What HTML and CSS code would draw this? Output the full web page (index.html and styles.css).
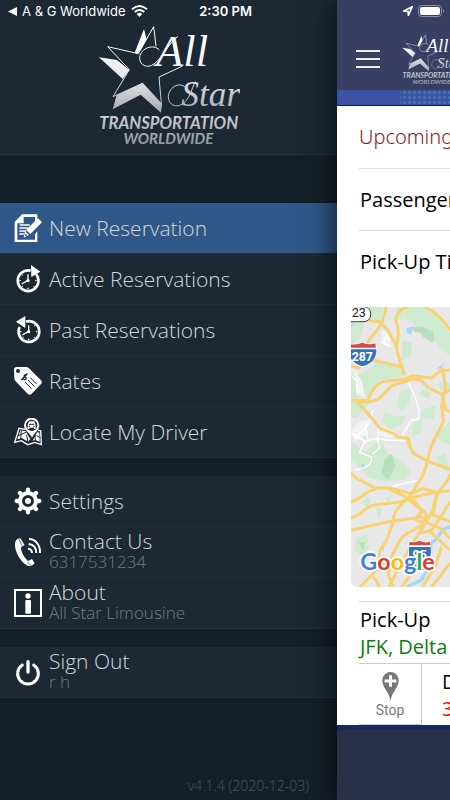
FILE: index.html
```html
<!doctype html>
<html lang='en-US'>
<head>
  <title>All Star Transportation</title>
  <meta charset='utf-8'>
  <meta name='viewport' content='width=device-width, initial-scale=1'>
  <link rel='stylesheet' href='styles.css'>
</head>
<body>
  <div class='app'>
    <aside class='drawer'>
      <header class='brand'>
        <div class='status'>
          <svg class='back' viewBox='0 0 9 9'><path d='M0 4.5 9 0V9Z'/></svg>
          <span>A &amp; G Worldwide</span>
          <svg class='wifi' viewBox='0 0 17 12'>
            <path class='line' d='M1 4.3Q8.500-2.200 16 4.300M3.700 7Q8.500 3 13.300 7'/>
            <path d='M5.700 8.900Q8.500 6.800 11.300 8.900L8.500 12Z'/>
          </svg>
          <time>2:30 PM</time>
        </div>
        <svg class='logo' viewBox='24 30 426 360' role='img' aria-label='All Star Transportation Worldwide'>
          <defs>
            <linearGradient id='silver' gradientUnits='userSpaceOnUse' x1='0' y1='90' x2='0' y2='390'>
              <stop offset='0' stop-color='#fff'/>
              <stop offset='.35' stop-color='#e4e5e8'/>
              <stop offset='.65' stop-color='#a9adb4'/>
              <stop offset='.72' stop-color='#d0d2d6'/>
              <stop offset='1' stop-color='#8e939b'/>
            </linearGradient>
            <g id='mark' fill='url(#silver)'>
              <path d='M27 127 81 135 118 165 98 192ZM162 42 170 73 145 116 134 113ZM80 241 158 203 216 266 213 293 152 239 68 283Z'/>
              <path class='thin' d='M198 94 191 35 145 116 53 95 118 164 69 245 158 205M276 154 207 186 215 276'/>
              <path class='thin' d='M208 105C190 85 153 100 149 126C147 151 172 162 192 147C219 128 236 83 264 64'/>
              <path class='thin' d='M292 223C272 196 238 214 235 244C234 271 260 280 279 266C300 250 303 225 316 200'/>
              <text class='script' x='198' y='154' font-size='134'>All</text>
              <text class='script' x='274' y='272' font-size='106'>Star</text>
              <text class='caps' x='236' y='343' font-size='50'>TRANSPORTATION</text>
              <text class='caps' x='235' y='386' font-size='45'>WORLDWIDE</text>
            </g>
          </defs>
          <use href='#mark'/>
        </svg>
      </header>

      <nav>
        <ul class='menu'>
          <li><a href='#new' class='active'>
            <svg viewBox='42 178 84 84'>
              <path d='M44 202 66 179H112V202L105 208V187H71V206H52V255H105V239L112 230V262H44Z'/>
              <path class='line' stroke-width='4' d='M59 211H89M58 220H85M58 229H78M58 238H72'/>
              <path d='M114 191 126 203 91 238 78 226ZM75 230 87 241 71 249Z'/>
              <circle class='blue' cx='78' cy='242' r='3'/>
            </svg>
            <span>New Reservation</span></a></li>
          <li><a href='#active'>
            <svg viewBox='42 330 84 84'>
              <path class='line' stroke-width='8' d='M108 357A31 31 0 1 1 92 347'/>
              <path d='M93 330 121 350 94 366Z'/>
              <path class='line' stroke-width='4' d='M84 358V376L65 387M62 377H58M110 377H106M84 402V398M68 361 66 359M68 393 66 395M101 394 103 396'/>
              <circle cx='84' cy='377' r='5'/>
            </svg>
            <span>Active Reservations</span></a></li>
          <li><a href='#past'>
            <svg viewBox='42 33 84 84'>
              <path class='line' stroke-width='8' d='M78 50A31 31 0 1 1 59 66'/>
              <path d='M48 50 76 33V69Z'/>
              <path class='line' stroke-width='4' d='M86 61V79L67 90M64 80H60M112 80H108M86 105V101M103 63 105 61M70 96 68 98M103 97 105 99'/>
              <circle cx='86' cy='80' r='5'/>
            </svg>
            <span>Past Reservations</span></a></li>
          <li><a href='#rates'>
            <svg viewBox='42 184 84 84'>
              <path fill-rule='evenodd' d='M50 184H78Q83 184 87 188L123 224Q128 230 123 235L95 264Q89 270 83 264L46 226Q43 223 43 218L42 192Q42 184 50 184ZM60 196A6 6 0 1 0 48 196A6 6 0 1 0 60 196'/>
              <path class='cut' stroke-width='4' d='M81 209Q75 204 73 210C70 216 81 213 78 219Q75 225 67 218M82 203 64 223'/>
              <path class='cut' stroke-width='3' d='M91 216 110 235M84 223 103 242M76 230 95 249'/>
            </svg>
            <span>Rates</span></a></li>
          <li><a href='#driver'>
            <svg viewBox='42 336 84 84'>
              <path class='line' stroke-width='4' d='M76 370 57 367 44 409 64 404 83 416 104 409 124 416 122 374 114 373'/>
              <path d='M61 373 77 376 91 399 84 407 66 396 52 400ZM111 379 118 380 119 407 105 402 98 404Z'/>
              <path class='cut' stroke-width='3' d='M64 372 62 399M52 390 78 379M80 386 84 412M105 386 106 407M110 389 122 396'/>
              <path d='M96 395C89 379 72 374 72 358A23 23 0 0 1 118 358C118 374 103 379 96 395Z'/>
              <circle class='dark' cx='95' cy='358' r='17'/>
              <path d='M87 346H103L107 356V369H102V365H88V369H83V356Z'/>
              <path class='cut' stroke-width='3' d='M87 355H103M86 361H90M100 361H104'/>
            </svg>
            <span>Locate My Driver</span></a></li>
        </ul>

        <ul class='menu'>
          <li><a href='#settings'>
            <svg viewBox='42 96 84 84'>
              <circle class='line' stroke-width='12' cx='84' cy='138' r='24'/>
              <path class='line' stroke-linecap='round' stroke-width='13' d='M84 111V104M84 165V172M57 138H50M111 138H118M65 119 60 114M103 157 108 162M65 157 60 162M103 119 108 114'/>
              <circle cx='84' cy='138' r='9'/>
            </svg>
            <span>Settings</span></a></li>
          <li><a href='#contact'>
            <svg viewBox='42 249 84 84'>
              <path d='M61 250Q51 249 47 258C38 279 60 322 83 332Q91 334 98 330L104 325 96 312 84 318C72 308 63 291 63 277L74 271Z'/>
              <path class='cut' stroke-width='2' d='M56 252 69 276M81 320 93 331'/>
              <path class='line' stroke-width='6' d='M84 281Q96 282 96 294M86 267Q109 270 109 294M87 252C108 252 121 272 120 294'/>
            </svg>
            <span>Contact Us<small>6317531234</small></span></a></li>
          <li><a href='#about'>
            <svg viewBox='42 39 84 84'>
              <rect class='line' stroke-width='6' x='45' y='42' width='78' height='78'/>
              <circle cx='84' cy='60' r='8'/>
              <rect x='76' y='72' width='17' height='41' rx='3'/>
            </svg>
            <span>About<small>All Star Limousine</small></span></a></li>
        </ul>

        <ul class='menu'>
          <li><a href='#signout'>
            <svg viewBox='42 250 84 84'>
              <path class='line' stroke-linecap='round' stroke-width='9' d='M67 271A31 31 0 1 0 101 271'/>
              <path class='line' stroke-linecap='round' stroke-width='10' d='M84 261V292'/>
            </svg>
            <span>Sign Out<small>r h</small></span></a></li>
        </ul>
      </nav>
      <footer class='version'>v4.1.4 (2020-12-03)</footer>
    </aside>

    <main class='page'>
      <header class='topbar'>
        <div class='status'>
          <svg class='arrow' viewBox='0 0 12 12'><path d='M1 6 11 1 6.500 11 6 6.500Z'/></svg>
          <svg class='battery' viewBox='0 0 27 12'>
            <rect class='shell' x='.5' y='.5' width='23' height='11' rx='3'/>
            <rect x='2' y='2' width='20' height='8' rx='2'/>
            <path class='tip' d='M25 4Q27 6 25 8Z'/>
          </svg>
        </div>
        <div class='tools'>
          <button class='burger' aria-label='Menu'><i></i><i></i><i></i></button>
          <svg class='logo' viewBox='24 30 426 360' aria-hidden='true'><use href='#mark'/></svg>
        </div>
      </header>
      <div class='strip'></div>

      <div class='trip'>
        <h1>Upcoming</h1>
        <p class='field'>Passenger</p>
        <p class='field'>Pick-Up Time</p>
        <div class='map'>
          <svg viewBox='78 36 297 840' preserveAspectRatio='xMinYMin slice' role='img' aria-label='Map of the route'>
            <rect class='land' x='78' y='36' width='600' height='840'/>
            <g class='park'>
              <path d='M78 36H175L166 75 118 82 105 130 78 150ZM215 36H240L232 75 212 70ZM124 230 160 195 222 216 238 243 160 255 135 300 78 312V245ZM78 318 132 325 95 370H78Z'/>
              <path d='M243 36H300L345 75 375 115V180L350 165 325 130 290 120 262 80 235 70ZM233 135 262 145 255 185 230 195ZM160 95 200 125 210 145 185 130ZM225 290 258 280 255 320 232 350 215 335ZM290 282 318 290 312 312 285 300ZM180 352 212 365 240 362 232 385 195 405 172 378ZM290 345 335 330 325 372 285 365ZM262 392 290 370 285 415 262 424ZM340 260 375 265V290L345 285ZM330 415 375 380V450L345 435Z'/>
              <path d='M78 440 120 470 165 435 185 470 230 500 262 530 235 555 180 558 135 550 90 505 78 500ZM110 620 130 605 138 625 125 640ZM150 635 172 640 163 670ZM180 610 200 600 192 622ZM92 730 125 716 133 755 112 782 90 765ZM335 490 362 475 375 530 348 520ZM175 790 200 800 188 836 170 820Z'/>
            </g>
            <path class='wood' d='M260 97 290 95 326 112V143L295 127 285 112 268 110ZM170 535 180 490 200 478 212 512 190 555ZM102 745 122 740 112 768Z'/>
            <path class='town' d='M168 105 190 112 202 155 170 145ZM88 225 112 260 120 305 95 300ZM78 405 105 378 130 375 124 420 88 440ZM165 390 210 410 198 430 160 420Z'/>
            <g class='water'>
              <path d='M245 100 265 94 258 120 246 113ZM335 222 361 200 348 220ZM78 90 90 82 78 100ZM108 510 118 505 113 522ZM170 760 178 748 175 772Z'/>
              <path class='river' d='M375 696C345 700 345 730 318 745C317 785 310 820 293 850C280 865 262 865 245 876'/>
            </g>
            <path class='street' d='M250 258C262 290 286 330 282 372L259 375 230 425 255 432M82 245 95 258 98 295M88 432 130 390 145 345M78 415 122 440 150 430 255 440M120 380 130 440M160 385 158 440M90 525C120 520 145 510 138 485L103 472 122 437M160 436 163 460 142 478M180 435 240 437M205 573 278 557M185 120 175 145M178 125 195 135M165 140 195 155'/>
            <g class='road-edge'>
              <path d='M184 36C175 70 175 85 140 125L124 148M130 77 165 80C195 110 200 125 212 148C220 185 228 215 240 240M250 36C225 40 210 60 212 80C222 95 222 125 215 150M145 195 230 216M300 36C330 50 355 72 375 106M78 316 128 316C145 275 160 262 178 259L240 253 262 242 320 249 345 228 375 225M92 316C118 325 145 320 158 314L200 272 240 260 262 252 285 254 310 278 350 298 375 285M95 320 120 346 165 400 205 415 220 426 250 430 255 450M352 218 362 275 350 330 355 380 320 450M350 295 362 343 375 350M78 213 100 218 145 195'/>
              <path d='M245 435 265 475 310 500 375 522M328 435C305 475 310 525 282 560L258 598C235 630 205 635 202 690L185 735 165 765 160 800M78 535 95 550 152 580 190 578 258 596 295 580 330 592 375 587M78 620C110 615 120 585 155 582M78 668C110 665 115 635 150 630L230 620 255 610 330 592M78 706 190 680 265 670 295 665M258 605 292 648 270 672 292 684 305 658 292 645M190 580 235 602 292 648M335 595 322 650 285 710 255 760 190 876M370 540 375 545 335 600 325 660 375 680M290 690C265 710 240 710 225 735L200 785 190 840 205 876M375 620 345 670 320 705 285 715M300 680 345 700 375 730M285 712 315 710 375 765M350 755 330 815 292 876M375 805 320 876M105 876 150 830 180 790M145 845 165 876M230 876 270 820 318 745'/>
            </g>
            <rect class='route' x='50' y='35' width='87' height='45' rx='20'/>
            <text class='route-no' x='80' y='67' font-size='38'>23</text>
            <path class='shield-edge' d='M72 148Q90 151 112 143Q133 151 151 145Q164 199 112 216Q66 204 72 148Z'/>
            <path class='shield-top' d='M72 148Q90 151 112 143Q133 151 151 145L153 158H72Z'/>
            <path class='shield-base' d='M71 163H154Q156 202 112 214Q72 204 71 163Z'/>
            <text class='shield-no' x='112' y='198' font-size='37'>287</text>
            <path class='shield-edge' d='M254 740 283 744 314 740 320 790Q312 827 284 833Q252 821 250 785Z'/>
            <path class='shield-top' d='M254 740Q271 745 284 737Q298 746 314 740L317 751H252Z'/>
            <path class='shield-base' d='M252 756H317Q322 815 284 831Q248 812 252 756Z'/>
            <text class='shield-no' x='284' y='791' font-size='37'>95</text>
            <text class='google' x='106' y='825' font-size='70'><tspan class='g-blue'>G</tspan><tspan class='g-red'>o</tspan><tspan class='g-yellow'>o</tspan><tspan class='g-blue'>g</tspan><tspan class='g-green'>l</tspan><tspan class='g-red'>e</tspan></text>
          </svg>
        </div>
        <div class='field pickup'>
          <p>Pick-Up</p>
          <p class='place'>JFK, Delta</p>
        </div>
        <div class='stops'>
          <button class='stop'>
            <svg viewBox='173 246 50 88'><path d='M198 334C194 305 173 294 173 271A25 25 0 0 1 223 271C223 294 202 305 198 334Z'/><path class='plus' d='M198 256V291M180 273H216'/></svg>
            Stop
          </button>
          <div class='dropoff'>
            <p>Drop-Off</p>
            <p class='alert'>3</p>
          </div>
        </div>
      </div>
      <footer class='bottombar'></footer>
    </main>
  </div>
</body>
</html>
```
FILE: styles.css
```css
* { box-sizing: border-box; }
body { margin: 0; background: #151f28; font: 20px 'Open Sans', 'Noto Sans', sans-serif; }
h1, p, ul { margin: 0; padding: 0; }
ul { list-style: none; }
a { color: inherit; text-decoration: none; }
button { background: none; border: 0; padding: 0; font: inherit; color: inherit; }
svg { display: block; flex: none; fill: #fff; }
.app { display: flex; min-height: 100vh; overflow: hidden; }

.status { display: flex; align-items: center; height: 22px; color: #fff; font: 13px Inter, Roboto, sans-serif; white-space: nowrap; }
.line { fill: none; stroke: #fff; }
.cut { fill: none; stroke: #1c2834; }
.dark { fill: #1c2834; }
.blue { fill: #2f5889; }

/* drawer */
.drawer { flex: 1; display: flex; flex-direction: column; min-width: 0; background: #151f28; }
.brand { height: 155px; background: #1c2834; border-bottom: 1px solid #26343f; }
.brand .status { padding: 0 85px 0 8px; }
.brand time { margin-left: auto; font-weight: 600; }
.back { width: 9px; height: 9px; margin-right: 5px; }
.wifi { width: 17px; height: 12px; margin-left: 5px; }
.wifi .line { stroke-width: 2; }
.brand .logo { width: 142px; height: 120px; margin: 3px auto 0; }
.thin { fill: none; stroke: url(#silver); stroke-width: 3; }
.script { font-family: 'Snell Roundhand', 'Liberation Serif', serif; font-style: italic; }
.caps { font-family: Lato, sans-serif; font-style: italic; font-weight: 700; text-anchor: middle; }

nav { padding-top: 48px; }
.menu { margin-bottom: 18px; border-bottom: 1px solid #22303c; background: #1c2834; }
.menu li + li { border-top: 1px solid #22303c; }
.menu a { display: flex; align-items: center; gap: 7px; height: 50px; padding-left: 14px; color: #d5d8db; font: 300 21px/24px 'Open Sans', 'Noto Sans', sans-serif; white-space: nowrap; }
.menu a.active { background: #2f5889; }
.menu svg { width: 28px; height: 28px; }
.menu small { display: block; margin-bottom: 4px; color: #747c84; font-size: 17px; line-height: 18px; }
.version { margin-top: auto; padding: 0 28px 4px 0; color: #4d565e; font: 300 14px/20px 'Open Sans', sans-serif; text-align: right; }

/* current page, pushed to the right */
.page { position: relative; flex: 0 0 113px; display: flex; flex-direction: column; min-width: 0; background: #fff; box-shadow: 0 0 28px rgba(0,0,0,.8); color: #000; white-space: nowrap; }
.topbar { height: 90px; overflow: hidden; background: #383f62; }
.topbar .status { justify-content: flex-end; gap: 5px; padding-right: 5px; }
.arrow { width: 10px; height: 10px; }
.arrow path { fill: none; stroke: #fff; stroke-width: 2; }
.battery { width: 27px; height: 12px; }
.shell { fill: none; stroke: #8d91a5; }
.tip { fill: #8d91a5; }
.tools { display: flex; align-items: flex-start; gap: 22px; padding: 12px 0 0 19px; }
.burger { display: grid; gap: 6px; flex: none; width: 24px; padding-top: 16px; }
.burger i { height: 2px; background: #f1f1f5; }
.topbar .logo { width: 60px; height: 51px; }
.strip { height: 16px; border-bottom: 1px solid #0b1570; background: linear-gradient(90deg, #3c52a2 63px, transparent 63px), radial-gradient(circle, #3c78ac 1px, transparent 2px) 0 5px / 5px 5px, #3c52a2; }

.trip { flex: 1; overflow: hidden; padding-left: 14px; }
h1 { margin-left: 8px; color: #8e1719; font: 300 20px/62px 'Noto Sans', 'Open Sans', sans-serif; }
.field { margin-left: 8px; border-top: 1px solid #ddd; padding-left: 1px; line-height: 61px; }
.map { height: 280px; margin: 15px 0 14px; overflow: hidden; border-radius: 6px 0 0 6px; }
.map svg { width: 100%; height: 280px; }
.pickup { height: 62px; padding-top: 4px; line-height: 27px; }
.place { color: #0a7d0a; }
.stops { display: flex; margin-left: 8px; border-top: 1px solid #ccc; }
.stop { display: flex; flex-direction: column; align-items: center; flex: none; width: 63px; height: 61px; padding-top: 8px; border-right: 1px solid #ccc; border-bottom: 1px solid #ccc; color: #777; font: 14px/18px Roboto, sans-serif; }
.stop svg { width: 17px; height: 29px; fill: #777; }
.plus { stroke: #fff; stroke-width: 9; }
.dropoff { padding: 4px 0 0 20px; line-height: 27px; }
.alert { color: #f00; }
.bottombar { height: 75px; border-top: 5px solid #162a5c; background: #28334a; }

/* map */
.land { fill: #e8e8e8; }
.park { fill: #ceeacf; }
.wood { fill: #b7dfbc; }
.town { fill: #f3f3f3; }
.water { fill: #a6d6fb; }
.river { fill: none; stroke: #a6d6fb; stroke-width: 10; }
.street { fill: none; stroke: #fff; stroke-width: 4; }
.road-edge { fill: none; stroke: #f7d272; stroke-width: 9; stroke-linejoin: round; }
.route { fill: #fff; stroke: #444; stroke-width: 3; }
.route-no { fill: #222; font-family: Roboto, sans-serif; }
.shield-edge { fill: #fff; stroke: #fff; stroke-width: 4; }
.shield-top { fill: #d3494c; }
.shield-base { fill: #3571c2; }
.shield-no { fill: #fff; font-family: Roboto, sans-serif; font-weight: 700; text-anchor: middle; }
.google { font-family: Lato, sans-serif; font-weight: 700; stroke: #fff; stroke-width: 10; stroke-linejoin: round; paint-order: stroke; }
.g-blue { fill: #3f7de8; }
.g-red { fill: #e0392e; }
.g-yellow { fill: #f6b90c; }
.g-green { fill: #35a552; }
```
